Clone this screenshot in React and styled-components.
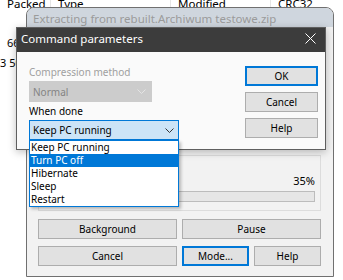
import styled, { createGlobalStyle } from "styled-components";

const Global = createGlobalStyle`
  html, body {
    margin: 0;
    padding: 0;
    background: #fff;
  }
  body {
    font-family: "Noto Sans", "Open Sans", sans-serif;
    overflow: hidden;
  }
`;

const Screen = styled.div`
  position: relative;
  width: 343px;
  height: 280px;
  overflow: hidden;
  background: #fff;
  color: #000;
`;

// file list behind the dialogs
const ListHeader = styled.div`
  display: grid;
  grid-template-columns: 50px 120px 100px 1fr;
  height: 16px;
  margin-top: -3px;
  font-size: 11.5px;
  line-height: 13px;
`;

const HeadCell = styled.div`
  padding-left: 7px;
  border-left: ${(p) => (p.first ? "none" : "1px solid #e5e5e5")};
  white-space: nowrap;
`;

const Rows = styled.div`
  margin-top: 20px;
`;

const FileRow = styled.div`
  display: grid;
  grid-template-columns: 50px 120px 100px 1fr;
  height: 20px;
  font-size: 11px;
  line-height: 20px;
`;

const FileCell = styled.div`
  padding-left: ${(p) => p.indent}px;
  white-space: nowrap;
`;

// extraction progress window
const BackWindow = styled.div`
  position: absolute;
  left: 26px;
  top: 7px;
  width: 308px;
  height: 270px;
  box-sizing: border-box;
  border: 1px solid #707070;
  border-radius: 8px 8px 0 0;
  background: #f2f2f2;
  display: flex;
  flex-direction: column;
  overflow: hidden;
`;

const BackTitle = styled.div`
  height: 19px;
  box-sizing: border-box;
  padding: 2px 0 0 6px;
  line-height: 17px;
  font-size: 11.5px;
  color: #9b9b9b;
  background: #cfd6de;
  white-space: nowrap;
`;

const BackBody = styled.div`
  flex: 1;
  display: flex;
  flex-direction: column;
  justify-content: flex-end;
  padding: 0 12px 10px 11px;
`;

const GroupBox = styled.div`
  border: 1px solid #dcdcdc;
  padding: 18px 5px 8px;
  margin-bottom: 8px;
`;

const Percent = styled.div`
  text-align: right;
  font-size: 11px;
  line-height: 14px;
`;

const ProgressTrack = styled.div`
  margin-top: 3px;
  height: 11px;
  box-sizing: border-box;
  border: 1px solid #bcbcbc;
  background: #e6e6e6;
`;

const ProgressFill = styled.div`
  height: 100%;
  background: #06b025;
`;

const ButtonGrid = styled.div`
  display: grid;
  grid-template-columns: 139px 67px 1fr;
  column-gap: 5px;
  row-gap: 7px;
`;

const WinButton = styled.button`
  grid-column: ${(p) => p.span || "auto"};
  width: ${(p) => (p.w ? `${p.w}px` : "auto")};
  height: 20px;
  box-sizing: border-box;
  margin: 0;
  padding: 0;
  border: ${(p) => (p.primary ? "2px solid #0078d7" : "1px solid #adadad")};
  background: #e1e1e1;
  color: #000;
  font-family: "Noto Sans", sans-serif;
  font-size: 10px;
  line-height: 16px;
  display: flex;
  align-items: center;
  justify-content: center;
`;

// command parameters dialog
const FrontWindow = styled.div`
  position: absolute;
  left: 16px;
  top: 27px;
  width: 310px;
  height: 123px;
  box-sizing: border-box;
  border: 1px solid #5f5f5f;
  background: #fafafa;
  box-shadow: 0 2px 8px rgba(0, 0, 0, 0.25);
  display: flex;
  flex-direction: column;
`;

const FrontTitle = styled.div`
  height: 24px;
  display: flex;
  align-items: flex-start;
  justify-content: space-between;
  padding-left: 4px;
  background: #3c3c3c;
  color: #fff;
  font-size: 11.5px;
  line-height: 21px;
  white-space: nowrap;
`;

const CloseIcon = styled.svg`
  margin: 5px 9px 0 0;
`;

const FrontBody = styled.div`
  flex: 1;
  display: flex;
  justify-content: space-between;
  padding: 11px 7px 0 12px;
`;

const LeftCol = styled.div`
  display: flex;
  flex-direction: column;
  width: 150px;
`;

const FieldLabel = styled.div`
  height: 18px;
  line-height: 18px;
  font-size: 10px;
  color: ${(p) => (p.dim ? "#a0a0a0" : "#000")};
`;

const Combo = styled.div`
  position: relative;
  width: ${(p) => p.w}px;
  height: ${(p) => p.h}px;
  box-sizing: border-box;
  display: flex;
  align-items: center;
  justify-content: space-between;
  padding: 0 ${(p) => (p.dim ? 5 : 4)}px 0 3px;
  border: 1px solid ${(p) => (p.dim ? "#cccccc" : "#0078d7")};
  background: ${(p) => (p.dim ? "#cccccc" : "#cce4f7")};
  color: ${(p) => (p.dim ? "#838383" : "#000")};
  font-size: 10px;
`;

const DropList = styled.div`
  position: absolute;
  left: -1px;
  top: calc(100% + 1px);
  width: 150px;
  box-sizing: border-box;
  border: 1px solid #0078d7;
  background: #fff;
  box-shadow: 2px 2px 3px rgba(0, 0, 0, 0.25);
  z-index: 5;
`;

const DropItem = styled.div`
  height: 13px;
  line-height: 12px;
  padding-left: 1px;
  font-size: 10px;
  white-space: nowrap;
  background: ${(p) => (p.selected ? "#0078d7" : "transparent")};
  color: ${(p) => (p.selected ? "#fff" : "#000")};
`;

const RightCol = styled.div`
  display: flex;
  flex-direction: column;
  gap: 6px;
  padding-top: 3px;
`;

const Chevron = ({ color }) => (
  <svg width="9" height="5" viewBox="0 0 9 5">
    <polyline points="0.5,0.5 4.5,4.5 8.5,0.5" fill="none" stroke={color} strokeWidth="1" />
  </svg>
);

const options = ["Keep PC running", "Turn PC off", "Hibernate", "Sleep", "Restart"];

export default function App() {
  return (
    <Screen>
      <Global />
      <ListHeader>
        <HeadCell first>Packed</HeadCell>
        <HeadCell>Type</HeadCell>
        <HeadCell>Modified</HeadCell>
        <HeadCell>CRC32</HeadCell>
      </ListHeader>
      <Rows>
        <FileRow>
          <FileCell indent={7}>66 816</FileCell>
        </FileRow>
        <FileRow>
          <FileCell indent={0}>3 508</FileCell>
        </FileRow>
      </Rows>

      <BackWindow>
        <BackTitle>Extracting from rebuilt.Archiwum testowe.zip</BackTitle>
        <BackBody>
          <GroupBox>
            <Percent>35%</Percent>
            <ProgressTrack>
              <ProgressFill style={{ width: "35%" }} />
            </ProgressTrack>
          </GroupBox>
          <ButtonGrid>
            <WinButton span="1">Background</WinButton>
            <WinButton span="2 / 4">Pause</WinButton>
            <WinButton>Cancel</WinButton>
            <WinButton primary>Mode...</WinButton>
            <WinButton>Help</WinButton>
          </ButtonGrid>
        </BackBody>
      </BackWindow>

      <FrontWindow>
        <FrontTitle>
          <span>Command parameters</span>
          <CloseIcon width="11" height="11" viewBox="0 0 11 11">
            <path d="M0.5 0.5 L10.5 10.5 M10.5 0.5 L0.5 10.5" stroke="#fff" strokeWidth="1" />
          </CloseIcon>
        </FrontTitle>
        <FrontBody>
          <LeftCol>
            <FieldLabel dim>Compression method</FieldLabel>
            <Combo dim w={123} h={21}>
              <span>Normal</span>
              <Chevron color="#e4e4e4" />
            </Combo>
            <FieldLabel>When done</FieldLabel>
            <Combo w={150} h={20}>
              <span>Keep PC running</span>
              <Chevron color="#333" />
              <DropList>
                {options.map((o) => (
                  <DropItem key={o} selected={o === "Turn PC off"}>
                    {o}
                  </DropItem>
                ))}
              </DropList>
            </Combo>
          </LeftCol>
          <RightCol>
            <WinButton w={73} primary>OK</WinButton>
            <WinButton w={73}>Cancel</WinButton>
            <WinButton w={73}>Help</WinButton>
          </RightCol>
        </FrontBody>
      </FrontWindow>
    </Screen>
  );
}
